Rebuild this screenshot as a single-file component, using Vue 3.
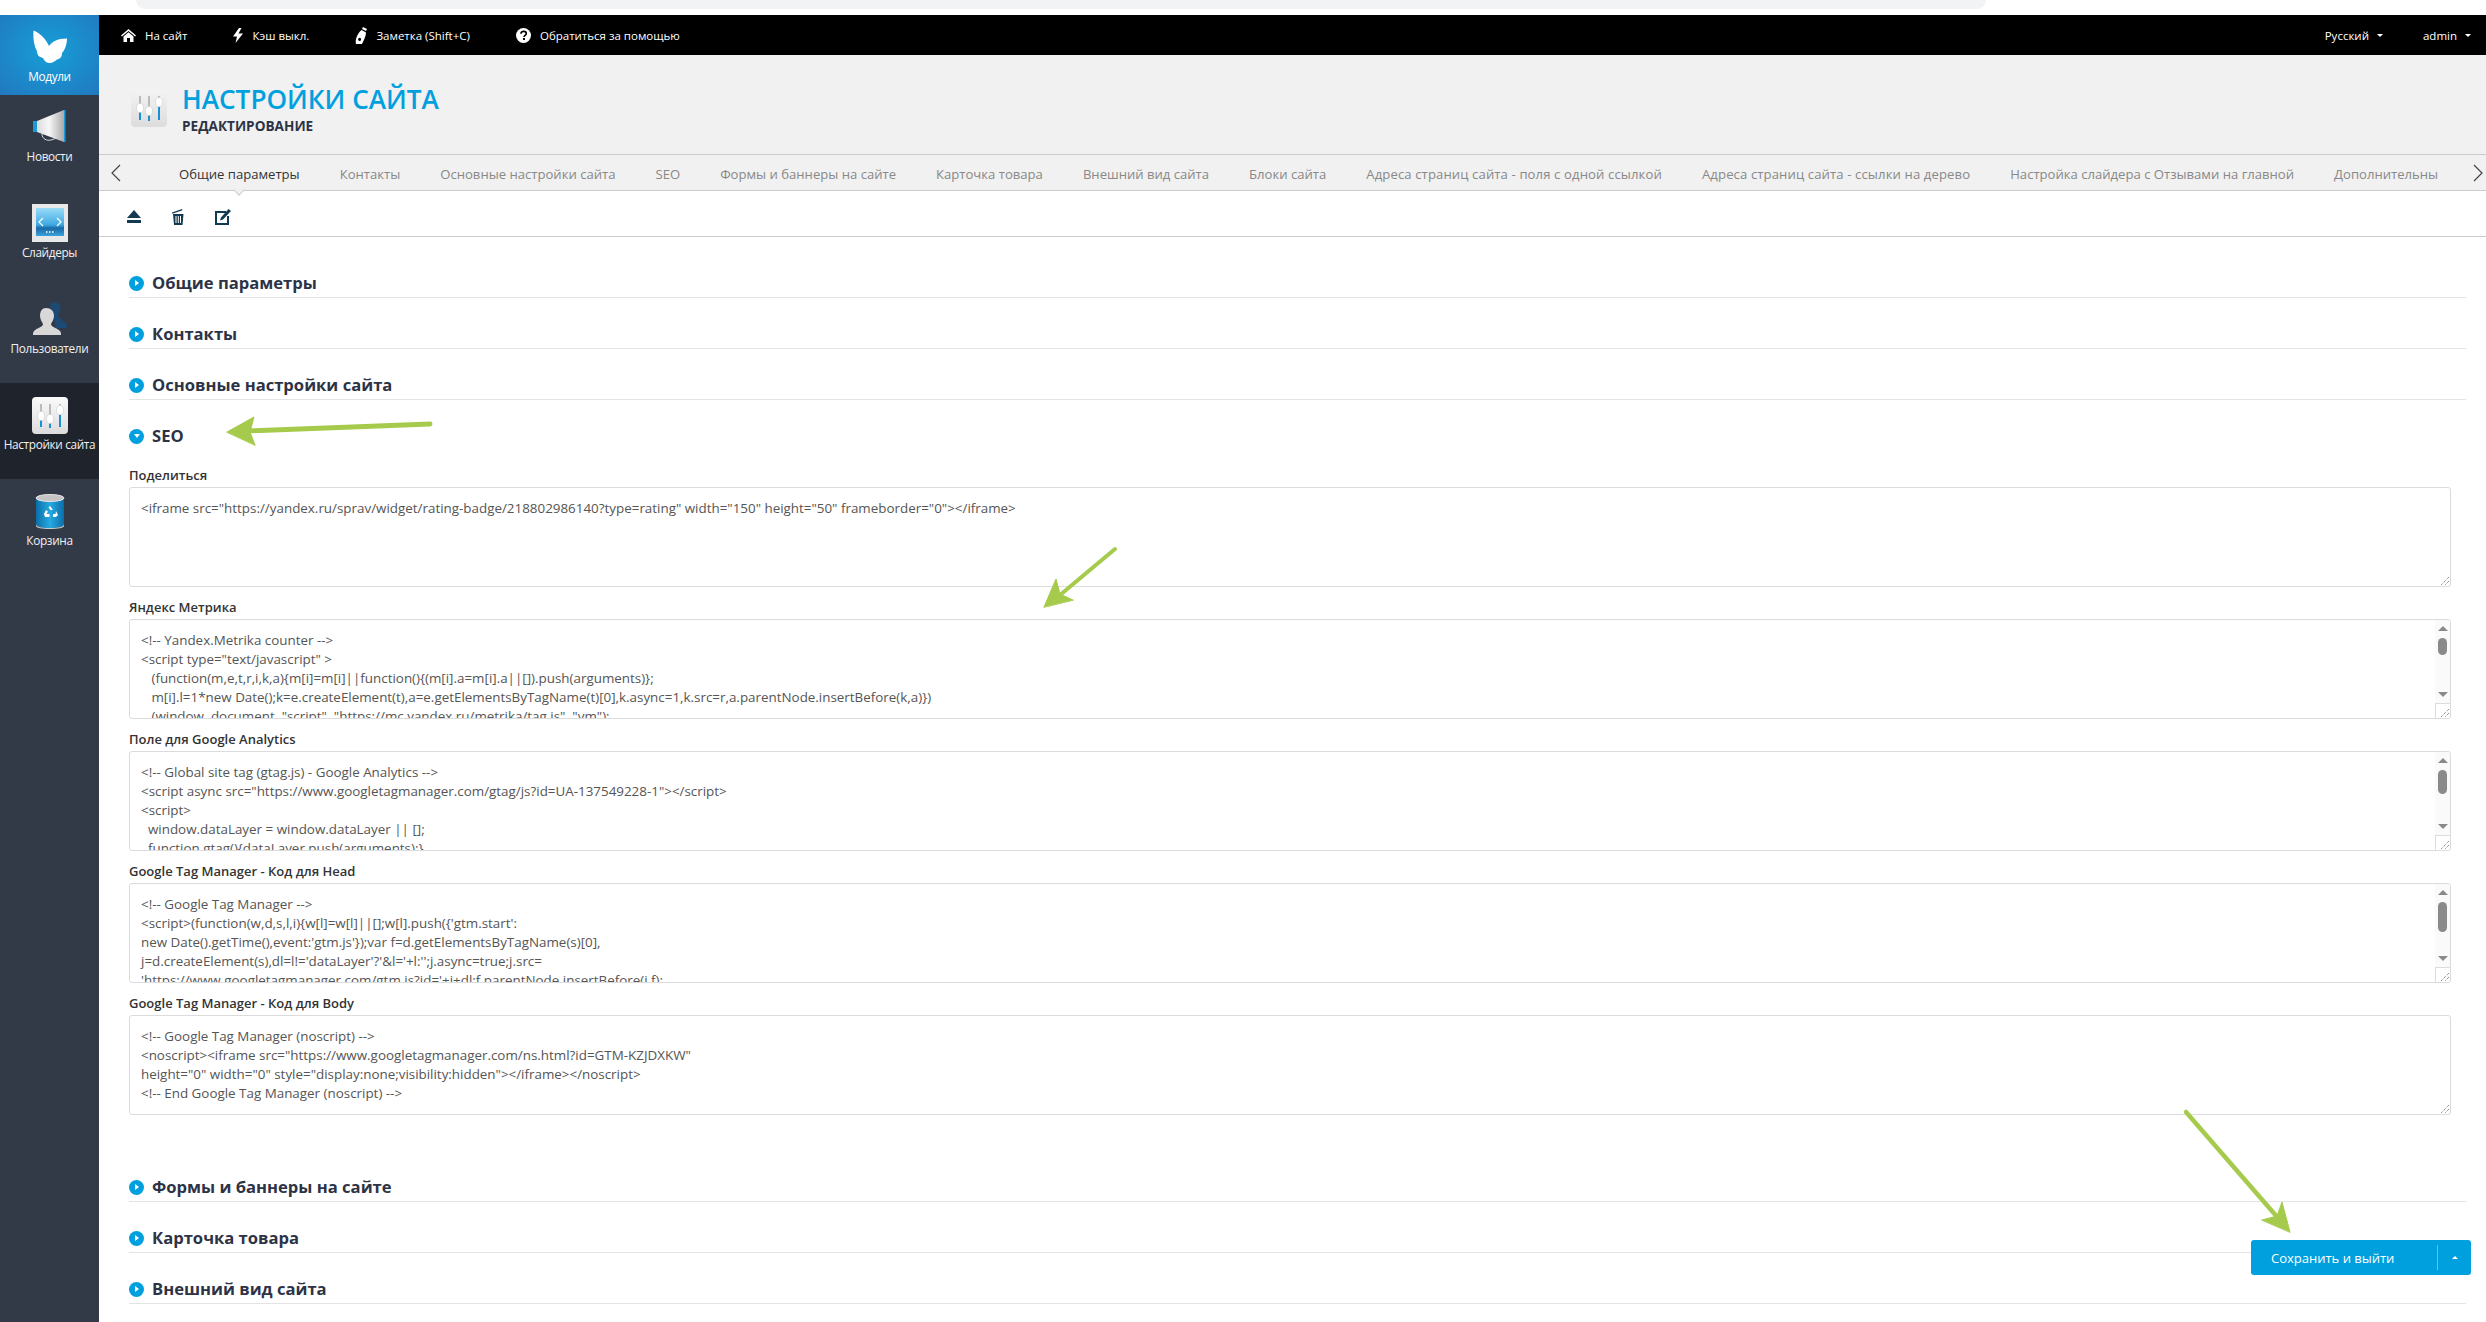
<script setup>
const tabs = ['Общие параметры','Контакты','Основные настройки сайта','SEO','Формы и баннеры на сайте','Карточка товара','Внешний вид сайта','Блоки сайта','Адреса страниц сайта - поля с одной ссылкой','Адреса страниц сайта - ссылки на дерево','Настройка слайдера с Отзывами на главной','Дополнительны']
const fields = [
  { label: 'Поделиться', text: '<iframe src="https://yandex.ru/sprav/widget/rating-badge/218802986140?type=rating" width="150" height="50" frameborder="0"></iframe>' },
  { label: 'Яндекс Метрика', thumb: 17, text: `<!-- Yandex.Metrika counter -->
<script type="text/javascript" >
   (function(m,e,t,r,i,k,a){m[i]=m[i]||function(){(m[i].a=m[i].a||[]).push(arguments)};
   m[i].l=1*new Date();k=e.createElement(t),a=e.getElementsByTagName(t)[0],k.async=1,k.src=r,a.parentNode.insertBefore(k,a)})
   (window, document, "script", "https://mc.yandex.ru/metrika/tag.js", "ym");` },
  { label: 'Поле для Google Analytics', thumb: 24, text: `<!-- Global site tag (gtag.js) - Google Analytics -->
<script async src="https://www.googletagmanager.com/gtag/js?id=UA-137549228-1"><\/script>
<script>
  window.dataLayer = window.dataLayer || [];
  function gtag(){dataLayer.push(arguments);}` },
  { label: 'Google Tag Manager - Код для Head', thumb: 30, text: `<!-- Google Tag Manager -->
<script>(function(w,d,s,l,i){w[l]=w[l]||[];w[l].push({'gtm.start':
new Date().getTime(),event:'gtm.js'});var f=d.getElementsByTagName(s)[0],
j=d.createElement(s),dl=l!='dataLayer'?'&l='+l:'';j.async=true;j.src=
'https://www.googletagmanager.com/gtm.js?id='+i+dl;f.parentNode.insertBefore(j,f);` },
  { label: 'Google Tag Manager - Код для Body', text: `<!-- Google Tag Manager (noscript) -->
<noscript><iframe src="https://www.googletagmanager.com/ns.html?id=GTM-KZJDXKW"
height="0" width="0" style="display:none;visibility:hidden"></iframe></noscript>
<!-- End Google Tag Manager (noscript) -->` }
]
const sectionsBefore = ['Общие параметры','Контакты','Основные настройки сайта']
const sectionsAfter = ['Формы и баннеры на сайте','Карточка товара','Внешний вид сайта']
</script>

<template>
  <div class="page">
    <div class="browser"><div class="omnibox"></div></div>
    <div class="shell">
      <aside class="side">
        <a class="nav nav-blue">
          <span class="ico">
            <svg width="34" height="34" viewBox="0 0 34 34"><path fill="#fff" d="M.5 .5C7 3 13 9 16 16C19 12 24 8.500 34 8.500C34 14 32 20 29 23C29 27 27 29 24 29.500C22 31 19 33.500 16 33C13 33 11 30 10 28C6 27 4 25 4 21C1 16 0 8 .5 .5Z"/></svg>
          </span>
          <span class="nav-label">Модули</span>
        </a>
        <a class="nav">
          <span class="ico">
            <svg width="34" height="36" viewBox="0 0 34 36">
              <defs><linearGradient id="mg" x1="0" y1="0" x2="1" y2="0"><stop offset="0" stop-color="#dcdcdc"/><stop offset=".45" stop-color="#f7f7f7"/><stop offset="1" stop-color="#a9a9a9"/></linearGradient></defs>
              <path d="M9 25c0 5 5 7 9 6s5-2 7-3" fill="none" stroke="#d9d9d9" stroke-width="1"/>
              <path fill="url(#mg)" d="M4 12L31 1V33L4 23Z"/>
              <rect x="0" y="12" width="4" height="11" fill="#1a9ad6"/>
              <rect x="31" y="1" width="1.500" height="32" fill="#1a9ad6"/>
            </svg>
          </span>
          <span class="nav-label">Новости</span>
        </a>
        <a class="nav">
          <span class="ico">
            <svg width="36" height="38" viewBox="0 0 36 38">
              <defs><linearGradient id="sl" x1="0" y1="0" x2="0" y2="1"><stop offset="0" stop-color="#9adcf8"/><stop offset=".6" stop-color="#3fa9e2"/><stop offset=".72" stop-color="#1a6aa6"/><stop offset="1" stop-color="#3aa3dd"/></linearGradient></defs>
              <rect width="36" height="38" fill="#e8e8e8"/>
              <rect x="4" y="4" width="28" height="28" fill="url(#sl)"/>
              <path d="M11 14l-4 4 4 4M25 14l4 4-4 4" fill="none" stroke="#fff" stroke-width="1.200"/>
              <path d="M14 28h8" stroke="#fff" stroke-width="1.500" stroke-dasharray="1.500 1.500"/>
            </svg>
          </span>
          <span class="nav-label">Слайдеры</span>
        </a>
        <a class="nav">
          <span class="ico">
            <svg width="36" height="34" viewBox="0 0 36 34">
              <path fill="#1c4a74" d="M18 2c3-3 9-2 10 2 1 3 0 7-2 9 1 4 5 6 8 8 1 1 1 3 1 5H24Z"/>
              <path fill="#d8d8d8" d="M14 6c5 0 8 3 8 8 0 3-2 6-3 8 0 3 6 4 9 7 1 1 1 3 1 4H1c0-1 0-3 1-4 3-3 9-4 9-7-1-2-3-5-3-8 0-5 2-8 6-8Z"/>
            </svg>
          </span>
          <span class="nav-label">Пользователи</span>
        </a>
        <a class="nav nav-active">
          <span class="ico">
            <svg width="36" height="37" viewBox="0 0 36 37">
              <defs><linearGradient id="st1" x1="0" y1="0" x2="0" y2="1"><stop offset="0" stop-color="#fafafa"/><stop offset="1" stop-color="#dcdcdc"/></linearGradient></defs>
              <rect width="36" height="37" rx="4" fill="url(#st1)"/>
              <path d="M9 7V17M18 7V19M28 7V11" stroke="#bbb" stroke-width="2"/>
              <path d="M9 21V30M18 26V31M28 18V30" stroke="#1a8fd1" stroke-width="2"/>
              <ellipse cx="9" cy="19" rx="3.500" ry="4.500" fill="#fff" stroke="#ccc" stroke-width=".6"/>
              <ellipse cx="18" cy="22" rx="3.500" ry="4.500" fill="#fff" stroke="#ccc" stroke-width=".6"/>
              <ellipse cx="28" cy="13" rx="3.500" ry="4.500" fill="#fff" stroke="#ccc" stroke-width=".6"/>
            </svg>
          </span>
          <span class="nav-label">Настройки сайта</span>
        </a>
        <a class="nav">
          <span class="ico">
            <svg width="30" height="35" viewBox="0 0 30 35">
              <defs><linearGradient id="bn" x1="0" y1="0" x2="1" y2="0"><stop offset="0" stop-color="#0a6ea8"/><stop offset=".5" stop-color="#28a9e2"/><stop offset="1" stop-color="#0a6ea8"/></linearGradient></defs>
              <path fill="url(#bn)" d="M1 4H29V30C29 33 23 34 15 34S1 33 1 30Z"/>
              <ellipse cx="15" cy="4" rx="14" ry="3.500" fill="#c4c4c4" stroke="#e6e6e6" stroke-width="1"/>
              <path d="M1 30C1 33 7 34 15 34S29 33 29 30V32C29 34 23 35 15 35S1 34 1 32Z" fill="#ccc"/>
              <path d="M15 12l3 4h-2.500l-2-2.500M9 20l2-4 2 1.500-1.500 2.500h3v3H10ZM21 17l2 4-2 2h-3v-3h2.500Z" fill="#fff"/>
            </svg>
          </span>
          <span class="nav-label">Корзина</span>
        </a>
      </aside>

      <main class="main">
        <header class="topbar">
          <a class="top-link">
            <svg width="15" height="13" viewBox="0 0 15 13"><path fill="#fff" d="M7.500 0L15 6.500 14 7.500 7.500 2 1 7.500 0 6.500ZM2.500 7.500L7.500 3.300 12.500 7.500V13H9V9H6V13H2.500Z"/></svg>
            На сайт
          </a>
          <a class="top-link">
            <svg width="10" height="15" viewBox="0 0 10 15"><path fill="#fff" d="M6 0L0 8.500H4L2.500 15 10 5.500H5.500L8.500 0Z"/></svg>
            Кэш выкл.
          </a>
          <a class="top-link">
            <svg width="12" height="17" viewBox="0 0 12 17"><path fill="#fff" d="M8 0l4 2-1 2-4-2ZM6.500 3l4.500 2.500C11 9 9 13 7 17H1C0 13 2 7 6.500 3ZM4 11a1.500 1.500 0 1 0 2 2 1.500 1.500 0 0 0-2-2Z"/></svg>
            Заметка (Shift+C)
          </a>
          <a class="top-link">
            <svg width="15" height="15" viewBox="0 0 15 15"><circle cx="7.500" cy="7.500" r="7.500" fill="#fff"/><path d="M5 5.800C5 4.300 6.200 3.300 7.700 3.300 9.200 3.300 10.300 4.200 10.300 5.500 10.300 7.300 8 7.300 8 9" fill="none" stroke="#000" stroke-width="1.700"/><rect x="7" y="10" width="2" height="2" fill="#000"/></svg>
            Обратиться за помощью
          </a>
          <span class="top-right">
            <a class="top-menu">Русский<i class="caret"></i></a>
            <a class="top-menu">admin<i class="caret"></i></a>
          </span>
        </header>

        <section class="head">
          <svg class="head-ico" width="36" height="38" viewBox="0 0 36 38">
            <defs><linearGradient id="st2" x1="0" y1="0" x2="0" y2="1"><stop offset="0" stop-color="#f4f4f4"/><stop offset="1" stop-color="#dcdcdc"/></linearGradient></defs>
            <rect width="36" height="38" rx="4" fill="url(#st2)"/>
            <path d="M9 7V17M18 7V19M28 7V11" stroke="#bbb" stroke-width="2"/>
            <path d="M9 21V31M18 26V32M28 18V31" stroke="#1a8fd1" stroke-width="2"/>
            <ellipse cx="9" cy="19" rx="3.500" ry="4.500" fill="#fff" stroke="#ccc" stroke-width=".6"/>
            <ellipse cx="18" cy="22" rx="3.500" ry="4.500" fill="#fff" stroke="#ccc" stroke-width=".6"/>
            <ellipse cx="28" cy="13" rx="3.500" ry="4.500" fill="#fff" stroke="#ccc" stroke-width=".6"/>
          </svg>
          <div>
            <h1 class="title">НАСТРОЙКИ САЙТА</h1>
            <div class="subtitle">РЕДАКТИРОВАНИЕ</div>
          </div>
        </section>

        <nav class="tabs">
          <svg class="chev" width="10" height="18" viewBox="0 0 10 18"><path d="M9 1L1 9l8 8" fill="none" stroke="#444" stroke-width="1.200"/></svg>
          <div class="tab-scroll">
            <a v-for="(t, i) in tabs" :key="t" class="tab" :class="{ 'tab-on': i === 0, 'tab-wide': i === 8 || i === 9 }">{{ t }}</a>
          </div>
          <svg class="chev" width="10" height="18" viewBox="0 0 10 18"><path d="M1 1l8 8-8 8" fill="none" stroke="#444" stroke-width="1.200"/></svg>
        </nav>

        <div class="tools">
          <svg width="14" height="13" viewBox="0 0 14 13"><path fill="#123a52" d="M7 0l7 8H0ZM0 10h14v3H0Z"/></svg>
          <svg width="12" height="17" viewBox="0 0 12 17"><path fill="#123a52" d="M0 4.500L10 1l.4 1.300-10 3.500ZM1 6h10.500l-1 11H2ZM3.500 8v7h1V8ZM5.800 8v7h1V8ZM8 8v7h1V8Z"/></svg>
          <svg width="16" height="16" viewBox="0 0 16 16"><path fill="none" stroke="#123a52" stroke-width="2" d="M11 3H1v12h12V7"/><path fill="#123a52" d="M13.500 0L16 2 8 10.500 5 11.500 6 8.500Z"/></svg>
        </div>

        <div class="content">
          <h3 v-for="s in sectionsBefore" :key="s" class="sec"><i class="dot"><b class="tri-r"></b></i>{{ s }}</h3>
          <h3 class="sec sec-open"><i class="dot"><b class="tri-d"></b></i>SEO</h3>
          <div class="fields">
            <div v-for="f in fields" :key="f.label" class="field">
              <label class="lbl">{{ f.label }}</label>
              <div class="ta">
                <div class="ta-text">{{ f.text }}</div>
                <div v-if="f.thumb" class="sb">
                  <i class="sb-up"></i>
                  <i class="sb-thumb" :style="{ height: f.thumb + 'px' }"></i>
                  <i class="sb-down"></i>
                </div>
                <div class="grip" :class="{ 'grip-box': f.thumb }">
                  <svg width="9" height="9" viewBox="0 0 9 9"><path d="M9 1L1 9M9 5L5 9" stroke="#666" stroke-width="1" stroke-dasharray="1 1"/></svg>
                </div>
              </div>
            </div>
          </div>
          <h3 v-for="s in sectionsAfter" :key="s" class="sec"><i class="dot"><b class="tri-r"></b></i>{{ s }}</h3>
        </div>
      </main>
    </div>

    <div class="save">
      <span class="save-text">Сохранить и выйти</span>
      <span class="save-more"><i class="caret-up"></i></span>
    </div>

    <svg class="notes" width="2486" height="1322" viewBox="0 0 2486 1322" aria-hidden="true">
      <g fill="#a6cb4c" stroke="#a6cb4c" stroke-linecap="round">
        <path d="M430 424L245 431" stroke-width="5" fill="none"/>
        <path d="M227 432L254 417 250 432 255 445Z" stroke-width="1"/>
        <path d="M1115 549L1060 595" stroke-width="4" fill="none"/>
        <path d="M1044 607L1056 579 1060 594 1073 600Z" stroke-width="1"/>
        <path d="M2186 1112L2278 1218" stroke-width="4.500" fill="none"/>
        <path d="M2290 1232L2282 1202 2277 1216 2262 1220Z" stroke-width="1"/>
      </g>
    </svg>
  </div>
</template>

<style>
html, body { margin: 0; background: #fff; overflow: hidden; }
</style>

<style scoped>
.page {
  position: relative;
  width: 2486px;
  height: 1322px;
  overflow: hidden;
  background: #fff;
  font-family: "Open Sans", "Noto Sans", sans-serif;
  color: #333;
}
.browser { height: 15px; padding-left: 136px; }
.omnibox { width: 1850px; height: 9px; background: #f1f3f4; border-radius: 0 0 12px 12px; }
.shell { display: flex; height: 1307px; }
.side { width: 99px; flex: none; background: #333a47; }
.nav {
  display: flex;
  flex-direction: column;
  align-items: center;
  height: 96px;
  padding-top: 13px;
  box-sizing: border-box;
  color: #f0f0f0;
}
.nav-blue {
  height: 80px;
  background: radial-gradient(ellipse 70px 60px at 50% 45%, #169fd8 0%, #2179bf 100%);
  color: #fff;
}
.nav-active { background: #1f232c; }
.ico { height: 38px; display: flex; align-items: center; justify-content: center; }
.nav-label { margin-top: 2px; font-size: 11.800px; line-height: 16px; white-space: nowrap; letter-spacing: -.35px; }
.main { flex: 1; min-width: 0; display: flex; flex-direction: column; }
.topbar {
  height: 40px;
  flex: none;
  background: #000;
  display: flex;
  align-items: center;
  gap: 46px;
  padding: 0 15px 0 22px;
  color: #fff;
  font-size: 11.500px;
}
.top-link { display: flex; align-items: center; gap: 9px; white-space: nowrap; }
.top-right { margin-left: auto; display: flex; gap: 40px; }
.top-menu { display: flex; align-items: center; gap: 8px; }
.caret { width: 0; height: 0; border: 3px solid transparent; border-top: 3px solid #fff; border-bottom: 0; margin-top: 1px; }
.head { height: 99px; flex: none; box-sizing: border-box; background: #f1f1f1; display: flex; align-items: flex-start; padding: 34px 0 0 32px; gap: 15px; }
.title { margin: -8px 0 0; font-size: 26.200px; line-height: 36px; font-weight: 600; color: #00a0de; white-space: nowrap; }
.subtitle { font-size: 13.600px; line-height: 18px; font-weight: 700; color: #2d3346; }
.tabs {
  position: relative;
  height: 37px;
  flex: none;
  box-sizing: border-box;
  background: #f1f1f1;
  border-top: 1px solid #ccc;
  border-bottom: 1px solid #ccc;
  display: flex;
  align-items: center;
  padding: 0 3px 0 12px;
}
.tabs::after {
  content: "";
  position: absolute;
  left: 136px;
  top: 31px;
  width: 7px;
  height: 7px;
  background: #f1f1f1;
  border-right: 1px solid #ccc;
  border-bottom: 1px solid #ccc;
  transform: rotate(45deg);
}
.chev { flex: none; }
.tab-scroll { flex: 1; min-width: 0; display: flex; gap: 40px; padding-left: 58px; margin-right: 30px; overflow: hidden; height: 35px; align-items: center; }
.tab { font-size: 13.100px; color: #888; white-space: nowrap; line-height: 35px; padding-top: 3px; }
.tab-on { color: #333; }
.tab-wide { letter-spacing: .12px; }
.tools { height: 46px; flex: none; box-sizing: border-box; border-bottom: 1px solid #ccc; display: flex; align-items: center; gap: 31px; padding-left: 28px; padding-top: 6px; }
.content { padding: 10px 20px 0 30px; }
.sec {
  margin: 15px 0 0;
  height: 36px;
  box-sizing: border-box;
  padding: 11px 0 4px;
  border-bottom: 1px solid #e3e3e3;
  font-size: 16.600px;
  line-height: 20px;
  font-weight: 700;
  color: #2d3346;
  display: flex;
  align-items: center;
  gap: 8px;
}
.sec-open { border-bottom-color: transparent; }
.dot { width: 15px; height: 15px; border-radius: 50%; background: #00a0de; display: flex; align-items: center; justify-content: center; flex: none; }
.tri-r { width: 0; height: 0; border: 3px solid transparent; border-left: 4px solid #fff; border-right: 0; }
.tri-d { width: 0; height: 0; border: 3px solid transparent; border-top: 4px solid #fff; border-bottom: 0; }
.fields { padding: 15px 15px 25px 0; }
.field { margin-bottom: 11px; }
.lbl { display: block; font-size: 13px; line-height: 18px; font-weight: 600; color: #333; margin-bottom: 3px; }
.ta {
  position: relative;
  height: 100px;
  box-sizing: border-box;
  border: 1px solid #dcdcdc;
  border-radius: 3px;
  overflow: hidden;
  background: #fff;
}
.ta-text { padding: 11px 11px; white-space: pre; font-size: 13.400px; line-height: 19px; color: #555; }
.sb { position: absolute; right: 0; top: 0; bottom: 15px; width: 15px; background: #fafafa; display: flex; flex-direction: column; align-items: center; padding-top: 6px; box-sizing: border-box; }
.sb-up, .sb-down { width: 0; height: 0; border: 5px solid transparent; }
.sb-up { border-bottom: 5px solid #8a8a8a; border-top: 0; }
.sb-down { border-top: 5px solid #8a8a8a; border-bottom: 0; margin-top: auto; margin-bottom: 6px; }
.sb-thumb { width: 9px; background: #8a8a8a; border-radius: 5px; margin-top: 7px; }
.grip { position: absolute; right: 0; bottom: 0; width: 15px; height: 15px; box-sizing: border-box; display: flex; align-items: flex-end; justify-content: flex-end; padding: 1px; }
.grip-box { border-top: 1px solid #dcdcdc; border-left: 1px solid #dcdcdc; background: #fff; }
.save {
  position: absolute;
  left: 2251px;
  top: 1240px;
  width: 220px;
  height: 35px;
  background: #00a0de;
  border-radius: 3px;
  display: flex;
  align-items: center;
  color: #fff;
  font-size: 13px;
}
.save-text { width: 186px; box-sizing: border-box; padding-left: 20px; white-space: nowrap; }
.save-more { height: 25px; flex: 1; border-left: 1px solid #5ec3ea; display: flex; align-items: center; justify-content: center; }
.caret-up { width: 0; height: 0; border: 3px solid transparent; border-bottom: 3px solid #fff; border-top: 0; }
.notes { position: absolute; left: 0; top: 0; pointer-events: none; }
</style>
